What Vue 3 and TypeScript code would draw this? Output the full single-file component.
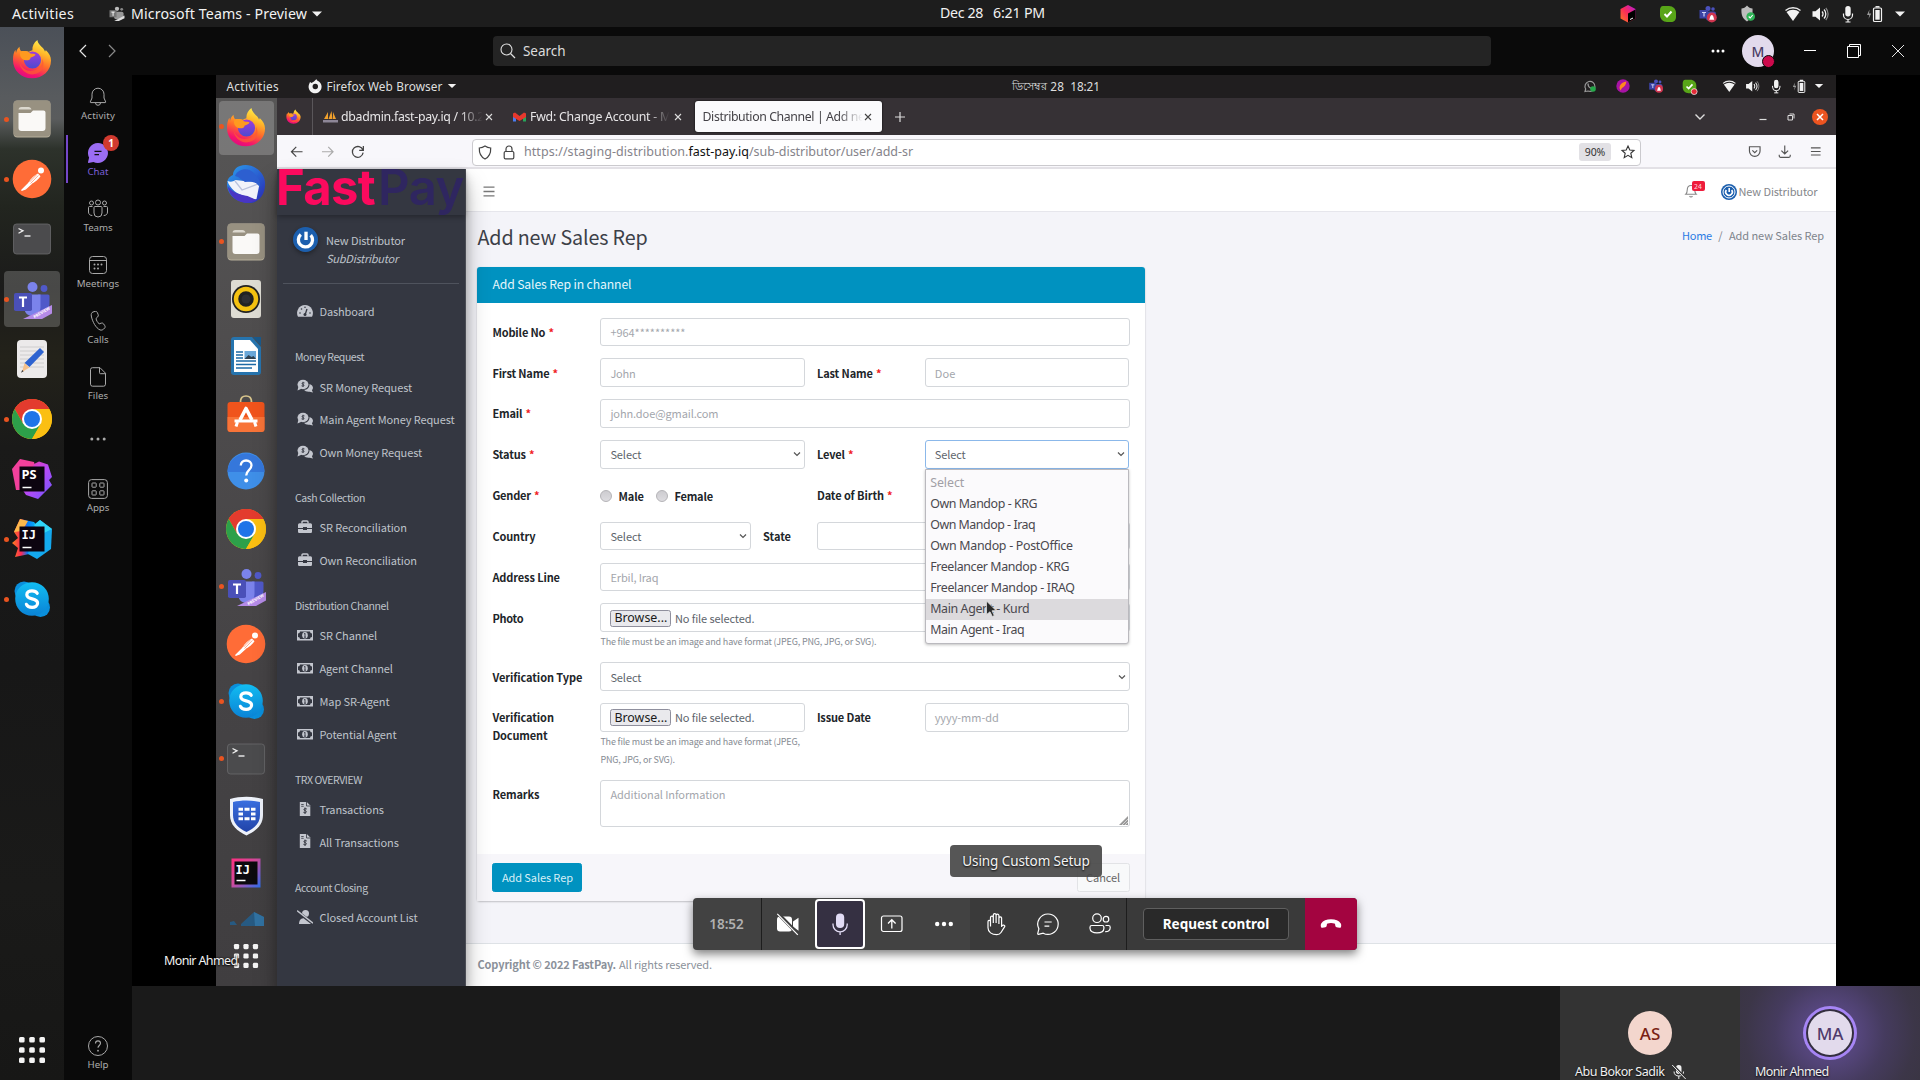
<script setup lang="ts">
interface DockApp { id: string; icon: string; dot?: boolean; active?: boolean }
interface NavItem { label: string; icon: string; w: number }
interface NavGroup { title: string; w: number; items: NavItem[] }

// Spreads a label over a given width by adjusting its tracking.
const vFit = {
  mounted(el: HTMLElement, binding: { value: number }) {
    const count = (el.textContent ?? '').length
    const width = el.getBoundingClientRect().width
    if (count > 0 && width > 0) {
      el.style.letterSpacing = ((binding.value - width) / count).toFixed(3) + 'px'
    }
  },
}

const dock: DockApp[] = [
  { id: 'd1', icon: 'firefox' },
  { id: 'd2', icon: 'folder', dot: true },
  { id: 'd3', icon: 'postman', dot: true },
  { id: 'd4', icon: 'terminal' },
  { id: 'd5', icon: 'teams', dot: true, active: true },
  { id: 'd6', icon: 'editor' },
  { id: 'd7', icon: 'chrome', dot: true },
  { id: 'd8', icon: 'phpstorm' },
  { id: 'd9', icon: 'idea', dot: true },
  { id: 'd10', icon: 'skype', dot: true },
]

const innerDock: DockApp[] = [
  { id: 'i1', icon: 'firefox', dot: true, active: true },
  { id: 'i2', icon: 'thunderbird' },
  { id: 'i3', icon: 'folder', dot: true },
  { id: 'i4', icon: 'rhythmbox' },
  { id: 'i5', icon: 'writer' },
  { id: 'i6', icon: 'software' },
  { id: 'i7', icon: 'yelp' },
  { id: 'i8', icon: 'chrome' },
  { id: 'i9', icon: 'teams', dot: true },
  { id: 'i10', icon: 'postman' },
  { id: 'i11', icon: 'skype', dot: true },
  { id: 'i12', icon: 'terminal', dot: true },
  { id: 'i13', icon: 'forti' },
  { id: 'i14', icon: 'ideaold' },
]

const rail = [
  { label: 'Activity', icon: 'r-bell', w: 34 },
  { label: 'Chat', icon: 'r-chat', w: 21, active: true },
  { label: 'Teams', icon: 'r-teams', w: 29 },
  { label: 'Meetings', icon: 'r-cal', w: 42.5 },
  { label: 'Calls', icon: 'r-call', w: 21.5 },
  { label: 'Files', icon: 'r-file', w: 20.5 },
  { label: '', icon: 'r-more', w: 0 },
  { label: 'Apps', icon: 'r-apps', w: 22.5 },
]

const groups: NavGroup[] = [
  { title: 'Money Request', w: 69, items: [
    { label: 'SR Money Request', icon: 'n-comments', w: 92.5 },
    { label: 'Main Agent Money Request', icon: 'n-comments', w: 135 },
    { label: 'Own Money Request', icon: 'n-comments', w: 102.5 },
  ] },
  { title: 'Cash Collection', w: 70, items: [
    { label: 'SR Reconciliation', icon: 'n-case', w: 87.3 },
    { label: 'Own Reconciliation', icon: 'n-case', w: 97.3 },
  ] },
  { title: 'Distribution Channel', w: 93.5, items: [
    { label: 'SR Channel', icon: 'n-bill', w: 57.5 },
    { label: 'Agent Channel', icon: 'n-bill', w: 73.3 },
    { label: 'Map SR-Agent', icon: 'n-bill', w: 70 },
    { label: 'Potential Agent', icon: 'n-bill', w: 77 },
  ] },
  { title: 'TRX OVERVIEW', w: 67, items: [
    { label: 'Transactions', icon: 'n-invoice', w: 64.3 },
    { label: 'All Transactions', icon: 'n-invoice', w: 79.2 },
  ] },
  { title: 'Account Closing', w: 72.7, items: [
    { label: 'Closed Account List', icon: 'n-userslash', w: 98 },
  ] },
]

const options = [
  { label: 'Select', w: 34, muted: true },
  { label: 'Own Mandop - KRG', w: 107 },
  { label: 'Own Mandop - Iraq', w: 105 },
  { label: 'Own Mandop - PostOffice', w: 142.5 },
  { label: 'Freelancer Mandop - KRG', w: 139 },
  { label: 'Freelancer Mandop - IRAQ', w: 144.5 },
  { label: 'Main Agent - Kurd', w: 99, hover: true },
  { label: 'Main Agent - Iraq', w: 94 },
]
</script>

<template>
  <svg class="defs" width="0" height="0" aria-hidden="true">
    <defs>
      <linearGradient id="gFox" x1="0.75" y1="0" x2="0.35" y2="1">
        <stop offset="0" stop-color="#fff44f" /><stop offset=".3" stop-color="#ffb82a" /><stop offset=".58" stop-color="#ff6a2b" /><stop offset=".85" stop-color="#f5156c" /><stop offset="1" stop-color="#e00b80" />
      </linearGradient>
      <linearGradient id="gFoxP" x1="0" y1="0" x2="0" y2="1"><stop offset="0" stop-color="#a13bdc" /><stop offset="1" stop-color="#4b4ad0" /></linearGradient>
      <linearGradient id="gSky" x1="0" y1="0" x2="0" y2="1"><stop offset="0" stop-color="#12bdf2" /><stop offset="1" stop-color="#0a83d6" /></linearGradient>
      <linearGradient id="gPs" x1="0" y1="0" x2="1" y2="1"><stop offset="0" stop-color="#ff318c" /><stop offset=".5" stop-color="#b74af7" /><stop offset="1" stop-color="#6b57ff" /></linearGradient>
      <linearGradient id="gIj" x1="0" y1="0" x2="1" y2="0"><stop offset="0" stop-color="#fc801d" /><stop offset=".35" stop-color="#fe2857" /><stop offset=".6" stop-color="#087cfa" /><stop offset="1" stop-color="#07c3f2" /></linearGradient>
      <linearGradient id="gIjo" x1="0" y1="0" x2="1" y2="1"><stop offset="0" stop-color="#fe2f80" /><stop offset=".45" stop-color="#d14a9c" /><stop offset="1" stop-color="#2a6ff0" /></linearGradient>
      <linearGradient id="gBird" x1="0" y1="0" x2="1" y2="1"><stop offset="0" stop-color="#2aa0ee" /><stop offset="1" stop-color="#2b2ab8" /></linearGradient>
      <linearGradient id="gForti" x1="0" y1="0" x2="0" y2="1"><stop offset="0" stop-color="#3a6fe0" /><stop offset="1" stop-color="#2143a8" /></linearGradient>
      <linearGradient id="gCube" x1="1" y1="0" x2="0" y2="1"><stop offset="0" stop-color="#b01be0" /><stop offset=".5" stop-color="#fb2a5b" /><stop offset="1" stop-color="#fd7a1e" /></linearGradient>
    </defs>

    <symbol id="firefox" viewBox="0 0 40 40">
      <path d="M20 39.3C9 39.3 1 31.500 1 20.700c0-4.500.8-7.500 2.400-9.900L4 14c.6-2.800 1.800-4.800 3.500-6.200 0 2.200.7 3.800 2.300 4.700 2-.6 4.600-.8 7 .2 1.400-.8 3-1.200 3.600-1.500-.3-4 1.600-7.800 5-10.200C26 5 29 7 31.300 9.500c0 0 1.200 1.400 1.600 3 .8-.3.800-1.500.8-1.500 3.500 3.400 5.300 6.500 5.300 10.500C39 31.500 31 39.300 20 39.300z" fill="url(#gFox)" />
      <circle cx="20.500" cy="21" r="8.600" fill="url(#gFoxP)" />
      <path d="M8.500 12.500c3.500-1 7.500-.4 10 2 2 .2 4 .2 5 1-.6 2-4 2.500-5 3.200 0 2.300-3 3-6.200 2.300C9 20 7 16 8.500 12.500z" fill="#ff9a1f" />
      <path d="M7.500 23c2 7 8 9.500 13 8.800 6-.8 10.500-5 9.500-12 3 5 1.500 12-4.500 14.500C17 38 8 32 7.500 23z" fill="#ff5a34" opacity=".75" />
    </symbol>
    <symbol id="folder" viewBox="0 0 40 40">
      <rect x="1.500" y="1.500" width="37" height="37" rx="4" fill="#b6ae9a" /><rect x="1.500" y="1.500" width="37" height="36" rx="4" fill="#989181" />
      <path d="M6.500 11c0-2 1-3 3-3h7c1.500 0 2.500 1 3 2.500H6.500z" fill="#dcd8ce" />
      <path d="M6.500 14h12l2.500-2.500h10.500a2 2 0 0 1 2 2V29a3 3 0 0 1-3 3h-21a3 3 0 0 1-3-3z" fill="#faf9f7" />
    </symbol>
    <symbol id="postman" viewBox="0 0 40 40">
      <circle cx="20" cy="20" r="19.300" fill="#ff6c37" />
      <circle cx="29" cy="11.500" r="3" fill="#fff" />
      <path d="M26 14.500l2.500 2.700c-2 3-5.500 6-10 8.300l-2-2c2.500-4 6-7.500 9.500-9z" fill="#fff" />
      <path d="M17.500 23.500L9.500 31.500l4-1.500 6-5.500" stroke="#fff" stroke-width="1.200" fill="#fff" />
      <path d="M18.500 24.500l7.800-8M17.500 23l7-7.200" stroke="#ff6c37" stroke-width=".6" />
    </symbol>
    <symbol id="terminal" viewBox="0 0 40 40">
      <rect x="1.500" y="5" width="37" height="30" rx="3" fill="#4b4b4d" stroke="#6a6a6c" stroke-width=".8" />
      <path d="M6.500 9.500l4.500 2.300-4.500 2.400" stroke="#f0f0f0" stroke-width="1.300" fill="none" /><path d="M12.500 17h6" stroke="#f0f0f0" stroke-width="1.400" />
    </symbol>
    <symbol id="teams" viewBox="0 0 40 40">
      <circle cx="32" cy="9.500" r="3.400" fill="#5059c9" /><path d="M26 15.500h10a1.500 1.500 0 0 1 1.500 1.500v8c0 4-3 7-6 7h-6z" fill="#5059c9" />
      <circle cx="20.500" cy="8" r="5" fill="#7b83eb" /><path d="M12 15.500h16.500V28c0 5-3.500 9-8.300 9S12 33 12 28z" fill="#7b83eb" />
      <rect x="2" y="14" width="18" height="18" rx="1.800" fill="#4a50b8" />
      <path d="M7 18.500h8M11 18.500v9.500" stroke="#fff" stroke-width="2.200" />
      <path d="M40 26v8.500L30 40H11z" fill="#b58be8" />
      <text x="0" y="0" transform="translate(22.500 39.500) rotate(-31)" font-size="4.200" font-weight="700" fill="#fff" font-family="Open Sans, sans-serif">PREVIEW</text>
    </symbol>
    <symbol id="editor" viewBox="0 0 40 40">
      <rect x="5" y="1" width="30" height="38" rx="4" fill="#eceaea" />
      <path d="M8 8h24M8 12h24M8 16h24M8 20h24M8 24h24M8 28h24" stroke="#c8c6c6" stroke-width=".8" />
      <path d="M28 9l4 4-14.500 15-5-4z" fill="#2d63d0" /><path d="M12.500 24l5 4.500-7.500 4.500z" fill="#f4c08a" /><path d="M10.300 31l1.300 1.200-2.600 1.600z" fill="#333" />
    </symbol>
    <symbol id="chrome" viewBox="0 0 40 40">
      <circle cx="20" cy="20" r="20" fill="#fbbc05" />
      <path d="M20 20L2.700 10A20 20 0 0 1 37.300 10H20z" fill="#e33b2e" /><path d="M20 0a20 20 0 0 1 17.300 10H20L11.300 25 2.700 10A20 20 0 0 1 20 0z" fill="#e33b2e" />
      <path d="M2.700 10L11.300 25h17.400L20 40A20 20 0 0 1 2.700 10z" fill="#2da04a" /><path d="M28.700 25L20 40a20 20 0 0 0 17.300-30H20z" fill="#fbbf12" />
      <circle cx="20" cy="20" r="10" fill="#fff" /><circle cx="20" cy="20" r="8" fill="#1f74e8" />
    </symbol>
    <symbol id="phpstorm" viewBox="0 0 40 40">
      <path d="M0 10L8 0l14 3 2 8-14 20H4z" fill="#f2409c" /><path d="M22 5l5-2.500 9 3L40 18l-3 3 3 5-14 14-12-4-4-6z" fill="url(#gPs)" />
      <rect x="7.500" y="7.500" width="25" height="25" fill="#0c0410" />
      <text x="9.500" y="19.800" font-size="12.800" font-weight="700" fill="#fff" font-family="Open Sans, sans-serif">PS</text><path d="M10.500 28.500h9" stroke="#fff" stroke-width="1.500" />
    </symbol>
    <symbol id="idea" viewBox="0 0 40 40">
      <path d="M2 13L8 0l14 3 4 5-4 26L3 38l3-9-6-5 6-5z" fill="url(#gIj)" /><path d="M2 13L8 0l8 2-6 10z" fill="#fdb84c" /><path d="M22 6l6-5 12 9-1 20-14 10-9-5z" fill="#14a9ef" /><path d="M22 6l6-5 12 9-10 5z" fill="#30d5f6" />
      <rect x="7.500" y="7.500" width="25" height="25" fill="#0c0410" />
      <text x="9.500" y="19.500" font-size="12" font-weight="700" fill="#fff" font-family="DejaVu Sans Mono, monospace">IJ</text><path d="M10.500 28.500h9" stroke="#fff" stroke-width="1.500" />
    </symbol>
    <symbol id="ideaold" viewBox="0 0 40 40">
      <rect x="5.500" y="5.500" width="29" height="29" fill="url(#gIjo)" /><rect x="8.500" y="8.500" width="23" height="23" fill="#0c0a0e" />
      <text x="9.500" y="21" font-size="12" font-weight="700" fill="#fff" font-family="DejaVu Sans Mono, monospace">IJ</text><path d="M10.500 27.500h9" stroke="#fff" stroke-width="1.500" />
    </symbol>
    <symbol id="skype" viewBox="0 0 40 40">
      <circle cx="12" cy="12" r="9.500" fill="#0a8fdc" /><circle cx="28.500" cy="28.500" r="9.500" fill="#0a8fdc" /><circle cx="20" cy="20" r="16.800" fill="url(#gSky)" />
      <path d="M25.200 14.300c-1-1.800-3-2.500-5.200-2.500-3 0-5.200 1.600-5.200 4 0 5.500 10.800 2.700 10.800 8.300 0 2.600-2.300 4.300-5.500 4.300-2.700 0-4.800-1-5.700-3.100" stroke="#fff" stroke-width="3.200" stroke-linecap="round" fill="none" />
    </symbol>
    <symbol id="thunderbird" viewBox="0 0 40 40">
      <path d="M14 2C24-2 38 6 39 18c1 12-6 20-14 21C14 40 1 33 1 20c0-5 3-8 6-9 0-4 3-8 7-9z" fill="url(#gBird)" />
      <path d="M1.500 17c3 1 5 1 8-1l17 2 7 2-3 15c-4 1-8-2-11-3C12 31 4 25 1.500 17z" fill="#f1f3fa" /><path d="M9 17l7 9 16-6" stroke="#b9c2dd" fill="none" stroke-width="1.300" /><path d="M9 12c3-8 14-9 19-3 3 3 7 8 6 14l-6-6-9 1-7-5z" fill="#2d5fd0" /><path d="M1.500 22c4 6 12 9 20 10l9 4c-8 6-26 3-29-14z" fill="#4a35c4" />
    </symbol>
    <symbol id="rhythmbox" viewBox="0 0 40 40">
      <rect x="5" y="1" width="30" height="38" rx="3" fill="#dedcd3" /><circle cx="20" cy="20" r="14" fill="#222" /><circle cx="20" cy="20" r="10" fill="none" stroke="#f5c211" stroke-width="4.500" /><circle cx="20" cy="20" r="4.500" fill="#2e2e33" />
    </symbol>
    <symbol id="writer" viewBox="0 0 40 40">
      <path d="M8 1h18l9 10v25a3 3 0 0 1-3 3H8a3 3 0 0 1-3-3V4a3 3 0 0 1 3-3z" fill="#2674ae" /><path d="M27 1h8v9z" fill="#1a5a8c" /><path d="M8 4h16l8 9v23H8z" fill="#fff" />
      <path d="M10 16h7M10 19h7M10 22h7M10 25h20M10 28.500h20M10 32h16" stroke="#1d6aa5" stroke-width="1.300" /><rect x="18.500" y="15" width="11.500" height="8" fill="#6aa7d8" /><path d="M18.500 23l4-4 3 2 2-1 2.500 3z" fill="#31414f" />
    </symbol>
    <symbol id="software" viewBox="0 0 40 40">
      <path d="M14.500 9.500C14 3 17 2 20 2s6 1 5.500 7.500" stroke="#d9c58c" stroke-width="1.600" fill="none" /><rect x="1.500" y="8" width="37" height="30" rx="3" fill="#f0541c" /><path d="M1.500 23h37v12a3 3 0 0 1-3 3h-31a3 3 0 0 1-3-3z" fill="#f87438" />
      <path d="M14 26L20 14.500 26 26" stroke="#fff" stroke-width="3.600" fill="none" stroke-linejoin="round" /><path d="M8.500 27h23" stroke="#fff" stroke-width="3" /><path d="M11.500 28l-1.500 4.500M28.500 28l1.500 4.500" stroke="#fff" stroke-width="3" />
    </symbol>
    <symbol id="yelp" viewBox="0 0 40 40">
      <circle cx="20" cy="20" r="18.500" fill="#3f8fe8" /><path d="M1.500 21a18.500 18.500 0 0 1 37 0z" fill="#3577db" /><path d="M14.800 14.500c0-3 2.200-5 5.300-5s5.400 2 5.400 4.800c0 5-5.300 4.700-5.300 10.200" stroke="#fff" stroke-width="2.300" fill="none" /><circle cx="20.200" cy="29.500" r="2" fill="#fff" />
    </symbol>
    <symbol id="forti" viewBox="0 0 40 40">
      <path d="M4 3c10-3 23-3 33 0v16c0 10-7 16-16.500 20.500C11 35 4 29 4 19z" fill="#eef2fa" /><path d="M7 6c8-2 19-2 27 0v13c0 8-5 13-13.500 17C12 32 7 27 7 19z" fill="url(#gForti)" />
      <path d="M12.500 13.200h4.500M18.500 13.200h5M25 13.200h4.500M12.500 18h4.500M25 18h4.500M12.500 22.800h4.500M18.500 22.800h5M25 22.800h4.500" stroke="#fff" stroke-width="3" />
    </symbol>

    <symbol id="wifi" viewBox="0 0 20 20"><path d="M2.500 6.500a12 12 0 0 1 15 0" stroke="#e8e8e8" stroke-width="1.500" fill="none" /><path d="M3.500 8a11 11 0 0 1 13 0L10 17z" fill="#f2f2f2" /></symbol>
    <symbol id="vol" viewBox="0 0 20 20"><path d="M2.500 7.300h3L10 3.500v13l-4.500-3.800h-3z" fill="#f2f2f2" /><path d="M12 7.500a3.500 3.500 0 0 1 0 5M14 5.500a6.500 6.500 0 0 1 0 9" stroke="#f2f2f2" stroke-width="1.300" fill="none" /><path d="M15.800 4a9 9 0 0 1 0 12" stroke="#8a8a8a" stroke-width="1.200" fill="none" /></symbol>
    <symbol id="micro" viewBox="0 0 20 20"><rect x="7.300" y="2" width="5.400" height="10.500" rx="2.700" fill="#f2f2f2" /><path d="M5.500 9.500v1.500a4.500 4.500 0 0 0 9 0V9.500M10 15v3M7.500 18h5" stroke="#f2f2f2" stroke-width="1.200" fill="none" /></symbol>
    <symbol id="battery" viewBox="0 0 20 20"><path d="M3.500 5.500L1 11h2.300L2.500 15 5.200 9.500H3z" fill="#9a9a9a" /><rect x="7.500" y="4" width="8" height="13.500" rx="1" fill="none" stroke="#f2f2f2" stroke-width="1.200" /><rect x="9.300" y="6" width="4.400" height="9.700" fill="#f2f2f2" /><path d="M9.500 2.800h4" stroke="#f2f2f2" stroke-width="1.500" /></symbol>
    <symbol id="caret" viewBox="0 0 12 12"><path d="M1 3.500h10L6 8.500z" fill="#f2f2f2" /></symbol>
    <symbol id="skypetray" viewBox="0 0 20 20"><path d="M5 2h6c4 0 7 3 7 7v4c0 3-2 5-5 5H9c-4 0-7-3-7-7V6c0-2 1-4 3-4z" fill="#58a518" /><path d="M6.500 10l2.500 2.500 4.500-5" stroke="#fff" stroke-width="2" fill="none" /></symbol>
    <symbol id="teamstray" viewBox="0 0 20 20"><circle cx="10" cy="4.500" r="2.500" fill="#4a51bd" /><circle cx="15" cy="5" r="1.800" fill="#4a51bd" /><rect x="8" y="7.500" width="10" height="9" rx="2" fill="#4048a8" /><rect x="1.500" y="6" width="8.500" height="8.500" fill="#3b43a5" /><path d="M4 8.500h4M6 8.500v4" stroke="#cfd2f5" stroke-width="1.200" /><circle cx="13.800" cy="13.500" r="5" fill="#d0354f" /><path d="M11.200 15.800c1-.9.600-4.500 2.600-4.700 2 .2 1.600 3.800 2.600 4.700z" fill="#fff" /></symbol>

    <symbol id="r-bell" viewBox="0 0 20 20"><path d="M10 1.200a6 6 0 0 0-6 6V11l-1.700 3.900c-.1.400.1.700.5.700h14.400c.4 0 .6-.3.500-.7L16 11V7.200a6 6 0 0 0-6-6zM7.500 15.800a2.500 2.500 0 0 0 5 0" fill="none" stroke="#a9a9a9" /></symbol>
    <symbol id="r-chat" viewBox="0 0 20 20"><path d="M10 0a10 10 0 1 1-4.600 18.900L.6 20c-.4 0-.7-.3-.6-.7l1.100-4.700A10 10 0 0 1 10 0z" fill="#9b6df3" /><path d="M6.500 8.300h7M6.500 11.700h4.500" stroke="#111" stroke-width="1.200" /></symbol>
    <symbol id="r-teams" viewBox="0 0 20 20"><g fill="none" stroke="#a9a9a9"><circle cx="3.500" cy="4" r="2" /><circle cx="16.500" cy="4" r="2" /><circle cx="10" cy="3.500" r="2.500" /><path d="M6 8.500c0-.6.400-1 1-1h6c.6 0 1 .4 1 1V14a4 4 0 0 1-8 0zM4.500 7.500H1.500c-.6 0-1 .4-1 1V13c0 2.200 1.500 3.500 3.800 3.500M15.500 7.500h3c.6 0 1 .4 1 1V13c0 2.200-1.500 3.500-3.800 3.500" /></g></symbol>
    <symbol id="r-cal" viewBox="0 0 20 20"><rect x="1.500" y="1.500" width="17" height="17" rx="3" fill="none" stroke="#a9a9a9" /><path d="M1.500 5.500h17" stroke="#a9a9a9" /><g fill="#a9a9a9"><circle cx="10" cy="9.500" r="1" /><circle cx="13.500" cy="9.500" r="1" /><circle cx="6.500" cy="9.500" r="1" /><circle cx="6.500" cy="13.500" r="1" /><circle cx="10" cy="13.500" r="1" /></g></symbol>
    <symbol id="r-call" viewBox="0 0 20 20"><path d="M5 1l2-.6c1-.3 1.900.2 2.300 1.100l.9 2.200c.3.800.1 1.600-.5 2.200L8 7.500c.4 2 1.500 4 3.200 5.300l2.300-.7c.8-.2 1.600 0 2 .7l1.300 1.900c.5.800.4 1.800-.2 2.400l-1 1c-1 .9-2.400 1.300-3.600.8C8 17.300 4.300 10.500 3.300 5 3 3 3.500 1.500 5 1z" fill="none" stroke="#a9a9a9" /></symbol>
    <symbol id="r-file" viewBox="0 0 20 20"><path d="M4.500.7H12l5.500 5.500v11a2 2 0 0 1-2 2h-11a2 2 0 0 1-2-2v-14.500a2 2 0 0 1 2-2zM11.500.7v5a1 1 0 0 0 1 1h5" fill="none" stroke="#a9a9a9" /></symbol>
    <symbol id="r-more" viewBox="0 0 20 20"><g fill="#a9a9a9"><circle cx="3.800" cy="10" r="1.500" /><circle cx="10" cy="10" r="1.500" /><circle cx="16.200" cy="10" r="1.500" /></g></symbol>
    <symbol id="r-apps" viewBox="0 0 20 20"><g fill="none" stroke="#a9a9a9"><rect x=".6" y=".6" width="18.800" height="18.800" rx="3" /><rect x="4" y="4" width="4.200" height="4.200" rx=".5" /><rect x="11.800" y="4" width="4.200" height="4.200" rx=".5" /><rect x="4" y="11.800" width="4.200" height="4.200" rx=".5" /><rect x="11.800" y="11.800" width="4.200" height="4.200" rx=".5" /></g></symbol>
    <symbol id="r-help" viewBox="0 0 20 20"><circle cx="10" cy="10" r="9.500" fill="none" stroke="#a9a9a9" /><path d="M7.500 7.500c0-1.600 1-2.600 2.500-2.600s2.500 1 2.500 2.400c0 2.100-2.500 2.300-2.500 4.500" fill="none" stroke="#a9a9a9" stroke-width="1.100" /><circle cx="10" cy="14.700" r=".9" fill="#a9a9a9" /></symbol>

    <symbol id="n-dash" viewBox="0 0 16 16"><path d="M8 2a8 8 0 0 0-7 11.800h14A8 8 0 0 0 8 2z" fill="#c3c6ce" /><path d="M8 12l2-6" stroke="#343741" stroke-width="1.300" /><g fill="#343741"><circle cx="8" cy="11.500" r="1.500" /><circle cx="3" cy="10" r=".8" /><circle cx="4.500" cy="6" r=".8" /><circle cx="13" cy="10" r=".8" /><circle cx="8" cy="4.300" r=".8" /></g></symbol>
    <symbol id="n-comments" viewBox="0 0 16 16"><ellipse cx="6" cy="6.500" rx="5.500" ry="4.700" fill="#c3c6ce" /><path d="M1.500 8L.5 12.500l4-1.800zM12.500 6c3.500 1 4.500 4.200 2.400 6.300l1.100 2.200-3.200-.8c-2.600.4-4.800-.4-5.800-1.900 3.400-.2 5.700-2.500 5.500-5.800z" fill="#c3c6ce" /><path d="M7.500 4.900c-2.500-.8-3.200.9-1.500 1.500s1.400 2.300-1.500 1.400M6 3.800v5.200" stroke="#343741" fill="none" stroke-width=".9" /></symbol>
    <symbol id="n-case" viewBox="0 0 16 16"><path d="M5 4.500V3a1 1 0 0 1 1-1h4a1 1 0 0 1 1 1v1.500" fill="none" stroke="#c3c6ce" stroke-width="1.400" /><path d="M2.500 4.300h11A1.500 1.500 0 0 1 15 5.800V9h-5V8H6v1H1V5.800a1.500 1.500 0 0 1 1.500-1.500zM1 10h5v1h4v-1h5v2.800a1.200 1.200 0 0 1-1.200 1.200H2.200A1.200 1.200 0 0 1 1 12.800z" fill="#c3c6ce" /></symbol>
    <symbol id="n-bill" viewBox="0 0 16 16"><rect x="-.5" y="3" width="17" height="10.500" rx="1" fill="#c3c6ce" /><path d="M3 4.500h10a2 2 0 0 0 2 2V10a2 2 0 0 0-2 2H3a2 2 0 0 0-2-2V6.500a2 2 0 0 0 2-2z" fill="#343741" /><ellipse cx="8" cy="8.200" rx="2.800" ry="3.200" fill="#c3c6ce" /><path d="M8 6.200v4M7 6.700h1M7 10.200h2" stroke="#343741" stroke-width=".9" /></symbol>
    <symbol id="n-invoice" viewBox="0 0 16 16"><path d="M2.800 1h7l3.500 3.500V15H2.800z" fill="#c3c6ce" /><path d="M9.500 1v4h4M4.200 3.500h2.500M4.200 5.300h2.500" stroke="#343741" stroke-width=".8" fill="none" /><path d="M9.800 8c-2.500-1.200-4 .9-1.700 1.600s1.500 3-1.700 1.700M8 6.500v6.500" stroke="#343741" stroke-width="1" fill="none" /></symbol>
    <symbol id="n-userslash" viewBox="0 0 16 16"><circle cx="8.500" cy="4.500" r="3.500" fill="#c3c6ce" /><path d="M2 15c0-4 2-6 6-6s6 2 6 6z" fill="#c3c6ce" /><path d="M-.5 2l17 13" stroke="#343741" stroke-width="3" /><path d="M0 1.500l16 12.700" stroke="#c3c6ce" stroke-width="1.400" /></symbol>
    <symbol id="chev" viewBox="0 0 10 10"><path d="M2 3.500l3 3 3-3" stroke="#555" stroke-width="1.200" fill="none" /></symbol>
    <symbol id="power" viewBox="0 0 24 24"><circle cx="12" cy="12" r="12" fill="#1c5fae" /><path d="M7.500 7.200a6.800 6.800 0 1 0 9.500.6" stroke="#fff" stroke-width="3.200" fill="none" /><path d="M12.500 4.500v8" stroke="#fff" stroke-width="3.200" /></symbol>
    <symbol id="gridDots" viewBox="0 0 28 28"><g fill="#f4f4f4"><rect x="1" y="1" width="5.600" height="5.600" rx="1.500" /><rect x="11.200" y="1" width="5.600" height="5.600" rx="1.500" /><rect x="21.400" y="1" width="5.600" height="5.600" rx="1.500" /><rect x="1" y="11.200" width="5.600" height="5.600" rx="1.500" /><rect x="11.200" y="11.200" width="5.600" height="5.600" rx="1.500" /><rect x="21.400" y="11.200" width="5.600" height="5.600" rx="1.500" /><rect x="1" y="21.400" width="5.600" height="5.600" rx="1.500" /><rect x="11.200" y="21.400" width="5.600" height="5.600" rx="1.500" /><rect x="21.400" y="21.400" width="5.600" height="5.600" rx="1.500" /></g></symbol>
  </svg>

  <div class="desktop">
    <header class="topbar">
      <div class="tb-left">
        <span v-fit="62">Activities</span>
        <svg class="tb-teams" viewBox="0 0 16 16"><circle cx="8" cy="3" r="2.300" fill="#bbb" /><circle cx="13" cy="3.500" r="1.500" fill="#888" /><rect x="5" y="6" width="10" height="8" rx="2" fill="#999" /><rect x="0" y="4.500" width="7.500" height="7.500" fill="#777" /><path d="M2 6.500h3.500M3.800 6.500v4" stroke="#fff" /><path d="M16 10v3l-6 3H5z" fill="#ddd" /></svg>
        <span v-fit="176">Microsoft Teams - Preview</span>
        <svg class="caret"><use href="#caret" /></svg>
      </div>
      <div class="tb-clock"><span v-fit="43">Dec 28</span><span v-fit="52">6:21 PM</span></div>
      <div class="tray">
        <i class="cell ind"><svg width="16" height="18" viewBox="0 0 16 18"><path d="M8 0l7.500 4v9.500L8 17.500.500 13.500V4z" fill="url(#gCube)" /><path d="M8 8.500l7.500-4v9L8 17.500z" fill="#000" /><path d="M10 14.500l3-1.500" stroke="#fff" /></svg></i>
        <i class="cell ind"><svg width="20" height="20"><use href="#skypetray" /></svg></i>
        <i class="cell ind"><svg width="20" height="20"><use href="#teamstray" /></svg></i>
        <i class="cell ind"><svg width="16" height="18" viewBox="0 0 16 18"><path d="M1.500 3.500c2 0 4-1 5.500-3 1.500 2 3.500 3 5.500 3 .5 6-1 10-5.500 13-4.500-3-6-7-5.500-13z" fill="#bdbdbd" /><circle cx="10.700" cy="11.500" r="4.300" fill="#2fb457" /><path d="M8.700 11.500l1.500 1.500 2.500-3" stroke="#fff" stroke-width="1.100" fill="none" /></svg></i>
        <i class="gap11"></i>
        <i class="cell sys"><svg width="20" height="20"><use href="#wifi" /></svg></i>
        <i class="cell sys"><svg width="20" height="20"><use href="#vol" /></svg></i>
        <i class="cell sys"><svg width="20" height="20"><use href="#micro" /></svg></i>
        <i class="cell sys"><svg width="20" height="20"><use href="#battery" /></svg></i>
        <i class="cell car"><svg class="caret"><use href="#caret" /></svg></i>
      </div>
    </header>

    <div class="body">
      <nav class="dock">
        <div v-for="a in dock" :key="a.id" class="dock-item" :class="{ active: a.active }">
          <i v-if="a.dot" class="run-dot"></i>
          <svg width="40" height="40"><use :href="'#' + a.icon" /></svg>
        </div>
        <svg class="dock-grid"><use href="#gridDots" /></svg>
      </nav>

      <div class="app">
        <div class="app-head">
          <div class="nav-arrows">
            <svg width="12" height="14" viewBox="0 0 12 14"><path d="M9 1L3 7l6 6" fill="none" stroke="#e6e6e6" stroke-width="1.200" /></svg>
            <svg width="12" height="14" viewBox="0 0 12 14"><path d="M3 1l6 6-6 6" fill="none" stroke="#8a8a8a" stroke-width="1.200" /></svg>
          </div>
          <div class="search">
            <svg width="16" height="16" viewBox="0 0 16 16"><circle cx="6.500" cy="6.500" r="5.500" fill="none" stroke="#e0e0e0" stroke-width="1.100" /><path d="M10.500 10.500L15 15" stroke="#e0e0e0" stroke-width="1.200" /></svg>
            <span v-fit="42.5">Search</span>
          </div>
          <div class="win">
            <svg class="w-dots" width="14" height="4" viewBox="0 0 14 4"><circle cx="2" cy="2" r="1.500" fill="#fff" /><circle cx="7" cy="2" r="1.500" fill="#fff" /><circle cx="12" cy="2" r="1.500" fill="#fff" /></svg>
            <div class="me">M<i class="busy"></i></div>
            <svg class="w-btn" viewBox="0 0 14 14"><path d="M1 6.500h12" stroke="#fff" /></svg>
            <svg class="w-btn" viewBox="0 0 14 14"><path d="M.5 2.500h11v11H.5zM2.500 2.500v-2h11v11h-2" fill="none" stroke="#fff" /></svg>
            <svg class="w-btn" viewBox="0 0 14 14"><path d="M1 1l12 12M13 1L1 13" stroke="#fff" stroke-width=".9" /></svg>
          </div>
        </div>

        <div class="app-body">
          <nav class="rail">
            <div v-for="r in rail" :key="r.icon" class="rail-item" :class="{ active: r.active, solo: !r.label }">
              <svg width="20" height="20"><use :href="'#' + r.icon" /></svg>
              <b v-if="r.active" class="count">1</b>
              <span v-if="r.label" v-fit="r.w">{{ r.label }}</span>
            </div>
            <div class="rail-item help">
              <svg width="20" height="20"><use href="#r-help" /></svg>
              <span v-fit="21">Help</span>
            </div>
          </nav>

          <main class="call">
            <div class="stage">
              <div class="screen">
                <div class="s-top">
                  <div class="s-left">
                    <span v-fit="52.5">Activities</span>
                    <svg width="14" height="14" viewBox="0 0 14 14"><path d="M2 3l1.500 1L6 2.500 8.500 0c0 2 3 2 4.200 4.500A6.500 6.500 0 1 1 1 5.500z" fill="#f2f2f2" /><circle cx="7.300" cy="7.500" r="2.700" fill="#201e1f" /></svg>
                    <span v-fit="116">Firefox Web Browser</span>
                    <svg class="caret sm"><use href="#caret" /></svg>
                  </div>
                  <div class="s-clock"><span v-fit="35.5" class="bn">ডিসেম্বর</span><span v-fit="14">28</span><span v-fit="29.5">18:21</span></div>
                  <div class="s-tray">
                    <i class="cell"><svg width="14" height="14" viewBox="0 0 14 14"><path d="M2 12.500l.7-2.500A5 5 0 1 1 5 12z" fill="none" stroke="#999" stroke-width="1.200" /><path d="M5 4.500c0 3 2 5 4.500 5" stroke="#999" stroke-width="1.400" fill="none" /><circle cx="10" cy="10" r="2.800" fill="#25a84a" /></svg></i>
                    <i class="cell"><svg width="14" height="14" viewBox="0 0 14 14"><circle cx="7" cy="7" r="6.700" fill="#a713a5" /><path d="M3.500 9c.5-4 3-6 7-6.500-1 4-2 5-4.500 6.500l-1.500 2.500z" fill="#ff8a1f" /></svg></i>
                    <i class="cell"><svg width="16" height="16"><use href="#teamstray" /></svg></i>
                    <i class="cell"><svg width="17" height="17" viewBox="0 0 20 20"><use href="#skypetray" /><circle cx="15.500" cy="16" r="3.500" fill="#e22b38" stroke="#fff" stroke-width=".8" /></svg></i>
                    <i class="gap10"></i>
                    <i class="cell sys"><svg width="16.500" height="16.500"><use href="#wifi" /></svg></i>
                    <i class="cell sys"><svg width="16.500" height="16.500"><use href="#vol" /></svg></i>
                    <i class="cell sys"><svg width="16.500" height="16.500"><use href="#micro" /></svg></i>
                    <i class="cell sys"><svg width="16.500" height="16.500"><use href="#battery" /></svg></i>
                    <i class="cell car"><svg class="caret sm"><use href="#caret" /></svg></i>
                  </div>
                </div>

                <div class="s-main">
                  <nav class="s-dock">
                    <div v-for="a in innerDock" :key="a.id" class="sd-item" :class="{ active: a.active }">
                      <i v-if="a.dot" class="run-dot"></i>
                      <svg width="40" height="40"><use :href="'#' + a.icon" /></svg>
                    </div>
                    <svg class="sd-fade" viewBox="0 0 34 14"><path d="M0 10l4-1 3 4H0zM11 12L24 0l10 5v9H11z" fill="#235f8e" /><path d="M24 0l10 5v9h-9z" fill="#2f7cb3" /></svg>
                    <svg class="sd-grid"><use href="#gridDots" /></svg>
                  </nav>

                  <div class="browser">
                    <div class="tabs">
                      <div class="pin"><svg width="15" height="15"><use href="#firefox" /></svg></div>
                      <div class="tab t1">
                        <svg width="15" height="13" viewBox="0 0 15 13"><path d="M1 9l4-7v7zM5.500 9l3-8 1 8zM10 9V2l3 7z" fill="#f0a02c" /><path d="M0 10h15v2.500H0z" fill="#8d8697" /></svg>
                        <span class="cut"><span v-fit="143">dbadmin.fast-pay.iq / 10.2</span></span>
                        <svg class="x"><path d="M1 1l6 6M7 1L1 7" stroke="#ddd" stroke-width="1.100" /></svg>
                      </div>
                      <div class="tab t2">
                        <svg width="13" height="10" viewBox="0 0 13 10"><path d="M0 1.500v8h3V5z" fill="#4a7df0" /><path d="M13 1.500v8h-3V5z" fill="#26a65b" /><path d="M0 1.500V5l6.500 4L13 5V1.500L11 .5 6.500 4 2 .5z" fill="#e7382d" /></svg>
                        <span class="cut"><span v-fit="141">Fwd: Change Account - M</span></span>
                        <svg class="x"><path d="M1 1l6 6M7 1L1 7" stroke="#ddd" stroke-width="1.100" /></svg>
                      </div>
                      <div class="tab t3">
                        <span class="cut"><span v-fit="162">Distribution Channel | Add ne</span></span>
                        <svg class="x"><path d="M1 1l6 6M7 1L1 7" stroke="#444" stroke-width="1.100" /></svg>
                      </div>
                      <svg class="plus" width="10" height="10" viewBox="0 0 10 10"><path d="M5 0v10M0 5h10" stroke="#ddd" stroke-width="1.200" /></svg>
                      <svg class="tchev" width="12" height="8" viewBox="0 0 12 8"><path d="M1.500 1.500L6 6l4.500-4.500" stroke="#ddd" stroke-width="1.400" fill="none" /></svg>
                      <svg class="wmin" width="8" height="8" viewBox="0 0 8 8"><path d="M.5 6.500h7" stroke="#ddd" stroke-width="1.200" /></svg>
                      <svg class="wres" width="8" height="8" viewBox="0 0 8 8"><path d="M1 2.500h4.500V7H1zM2.500 1H7v4.500" fill="none" stroke="#ddd" stroke-width="1" /></svg>
                      <svg class="wclose" width="16" height="16" viewBox="0 0 16 16"><circle cx="8" cy="8" r="8" fill="#ec5420" /><path d="M5 5l6 6M11 5l-6 6" stroke="#fff" stroke-width="1.500" /></svg>
                    </div>

                    <div class="toolbar">
                      <div class="tnav">
                        <svg viewBox="0 0 14 14"><path d="M13 7H1.500M6.500 2l-5 5 5 5" fill="none" stroke="#444" stroke-width="1.200" /></svg>
                        <svg viewBox="0 0 14 14"><path d="M1 7h11.500M7.500 2l5 5-5 5" fill="none" stroke="#aaa" stroke-width="1.200" /></svg>
                        <svg viewBox="0 0 14 14"><path d="M12.300 5.200A5.600 5.600 0 1 0 12.600 8M12.800 1v4.500H8.500" fill="none" stroke="#444" stroke-width="1.300" /></svg>
                      </div>
                      <div class="urlbar">
                        <svg class="u-shield" width="14" height="15" viewBox="0 0 14 15"><path d="M7 1c2 1.300 3.800 1.800 5.700 2 .2 5-1.200 8.800-5.700 11C2.500 11.800 1.100 8 1.300 3 3.200 2.800 5 2.300 7 1z" fill="none" stroke="#444" stroke-width="1.200" /></svg>
                        <svg class="u-lock" width="12" height="15" viewBox="0 0 12 15"><rect x="1.200" y="6.500" width="9.600" height="7.300" rx="1.300" fill="none" stroke="#444" stroke-width="1.200" /><path d="M3 6.500V4a3 3 0 0 1 6 0v2.500" fill="none" stroke="#444" stroke-width="1.200" /></svg>
                        <div class="url"><span v-fit="164.500">https://staging-distribution.</span><span v-fit="60.500" class="dom">fast-pay.iq</span><span v-fit="164">/sub-distributor/user/add-sr</span></div>
                        <div class="zoomlvl"><span v-fit="20.500">90%</span></div>
                        <svg class="u-star" width="14" height="14" viewBox="0 0 14 14"><path d="M7 1l1.800 4 4.200.4-3.200 2.900 1 4.300L7 10.300l-3.800 2.300 1-4.300L1 5.400 5.200 5z" fill="none" stroke="#333" stroke-width="1.100" /></svg>
                      </div>
                      <div class="tright">
                        <svg viewBox="0 0 14 14"><path d="M1.500 1.800h11v4.500a5.500 5.500 0 0 1-11 0zM4.500 5.500L7 8l2.500-2.500" fill="none" stroke="#555" stroke-width="1.200" /></svg>
                        <svg viewBox="0 0 14 14"><path d="M7 .5v8.500M3.500 5.800L7 9.300l3.500-3.500M1.300 10v1.500c0 .8.500 1.300 1.300 1.300h8.800c.8 0 1.300-.5 1.300-1.300V10" fill="none" stroke="#555" stroke-width="1.200" /></svg>
                        <svg viewBox="0 0 14 14"><path d="M2 3h10M2 6.700h10M2 10.400h10" stroke="#555" stroke-width="1.200" /></svg>
                      </div>
                    </div>

                    <div class="page">
                      <aside class="side">
                        <div class="brand"><span v-fit="99" class="b1">Fast</span><span v-fit="86" class="b2">Pay</span></div>
                        <div class="user">
                          <svg width="25" height="25"><use href="#power" /></svg>
                          <div class="who"><span v-fit="79">New Distributor</span><em v-fit="72">SubDistributor</em></div>
                        </div>
                        <div class="nav-item dash"><svg width="16" height="16"><use href="#n-dash" /></svg><span v-fit="55">Dashboard</span></div>
                        <template v-for="g in groups" :key="g.title">
                          <div class="nav-head"><span v-fit="g.w">{{ g.title }}</span></div>
                          <div v-for="n in g.items" :key="n.label" class="nav-item">
                            <svg width="16" height="16"><use :href="'#' + n.icon" /></svg><span v-fit="n.w">{{ n.label }}</span>
                          </div>
                        </template>
                      </aside>

                      <div class="content">
                        <div class="c-head">
                          <svg class="burger" width="12" height="11" viewBox="0 0 12 11"><path d="M.5 1.200h11M.5 5.500h11M.5 9.800h11" stroke="#777" stroke-width="1.300" /></svg>
                          <div class="bell">
                            <svg width="12" height="14" viewBox="0 0 12 14"><path d="M6 1.500c-2.500 0-3.700 1.800-3.700 4 0 3-.8 4-1.600 4.800h10.600C10.500 9.500 9.700 8.500 9.700 5.500c0-2.200-1.200-4-3.700-4zM4.600 12a1.500 1.500 0 0 0 2.800 0" fill="none" stroke="#888" stroke-width="1.100" /></svg>
                            <b>24</b>
                          </div>
                          <svg class="plogo" width="16" height="16" viewBox="0 0 24 24"><circle cx="12" cy="12" r="12" fill="#1c5fae" /><circle cx="12" cy="12" r="9" fill="none" stroke="#fff" stroke-width="1.500" /><path d="M8 9a5 5 0 1 0 8 0M12.300 6v6" stroke="#fff" stroke-width="2.400" fill="none" /></svg>
                          <span v-fit="79" class="pname">New Distributor</span>
                        </div>

                        <div class="c-title">
                          <h1><span v-fit="170">Add new Sales Rep</span></h1>
                          <div class="crumb"><span v-fit="30" class="home">Home</span><span class="sl">/</span><span v-fit="95">Add new Sales Rep</span></div>
                        </div>

                        <div class="card">
                          <div class="card-h"><span v-fit="139">Add Sales Rep in channel</span></div>
                          <div class="form">
                            <div class="row"><label><span v-fit="53">Mobile No</span><i>*</i></label><div class="f full ph"><span v-fit="75">+964**********</span></div></div>
                            <div class="row">
                              <label><span v-fit="57">First Name</span><i>*</i></label><div class="f half ph"><span v-fit="25">John</span></div>
                              <label class="l2"><span v-fit="56">Last Name</span><i>*</i></label><div class="f half ph"><span v-fit="21">Doe</span></div>
                            </div>
                            <div class="row"><label><span v-fit="30">Email</span><i>*</i></label><div class="f full ph"><span v-fit="108">john.doe@gmail.com</span></div></div>
                            <div class="row">
                              <label><span v-fit="33.500">Status</span><i>*</i></label><div class="f half"><span v-fit="31">Select</span><svg class="chev"><use href="#chev" /></svg></div>
                              <label class="l2"><span v-fit="28">Level</span><i>*</i></label>
                              <div class="f half focus"><span v-fit="31">Select</span><svg class="chev"><use href="#chev" /></svg>
                                <div class="menu">
                                  <div v-for="o in options" :key="o.label" class="opt" :class="{ muted: o.muted, hover: o.hover }"><span v-fit="o.w">{{ o.label }}</span></div>
                                  <svg class="cursor" width="13" height="19" viewBox="0 0 13 19"><path d="M1.500 1l9.500 9.500-4 .3 2.300 4.700-2 1L5 11.800l-3.500 2.700z" fill="#2a2a2a" stroke="#ddd" stroke-width=".8" /></svg>
                                </div>
                              </div>
                            </div>
                            <div class="row">
                              <label><span v-fit="38.500">Gender</span><i>*</i></label>
                              <div class="half radios"><i class="radio"></i><span v-fit="25.500" class="m">Male</span><i class="radio"></i><span v-fit="38.500">Female</span></div>
                              <label class="l2"><span v-fit="67">Date of Birth</span><i>*</i></label><div class="f half"></div>
                            </div>
                            <div class="row">
                              <label><span v-fit="43">Country</span></label><div class="f third"><span v-fit="31">Select</span><svg class="chev"><use href="#chev" /></svg></div>
                              <label class="l3"><span v-fit="28">State</span></label><div class="f full"></div>
                            </div>
                            <div class="row"><label><span v-fit="67.500">Address Line</span></label><div class="f full ph"><span v-fit="48">Erbil, Iraq</span></div></div>
                            <div class="row photo">
                              <label><span v-fit="31">Photo</span></label>
                              <div class="full"><div class="f"><span class="browse"><span v-fit="53">Browse...</span></span><span v-fit="79.500">No file selected.</span></div>
                                <div class="hint"><span v-fit="276">The file must be an image and have format (JPEG, PNG, JPG, or SVG).</span></div></div>
                            </div>
                            <div class="row"><label><span v-fit="90">Verification Type</span></label><div class="f full"><span v-fit="31">Select</span><svg class="chev"><use href="#chev" /></svg></div></div>
                            <div class="row doc">
                              <label class="two"><span v-fit="61.500">Verification</span><span v-fit="55">Document</span></label>
                              <div class="half"><div class="f"><span class="browse"><span v-fit="53">Browse...</span></span><span v-fit="79.500">No file selected.</span></div>
                                <div class="hint"><span v-fit="199.500">The file must be an image and have format (JPEG,</span><span v-fit="74.500">PNG, JPG, or SVG).</span></div></div>
                              <label class="l2"><span v-fit="54">Issue Date</span></label><div class="f half ph"><span v-fit="64">yyyy-mm-dd</span></div>
                            </div>
                            <div class="row area">
                              <label><span v-fit="47">Remarks</span></label>
                              <div class="f full ph ta"><span v-fit="115">Additional Information</span><svg class="grip" width="9" height="9" viewBox="0 0 9 9"><path d="M0 9l9-9v9z" fill="#999" /><path d="M3 9l6-6M6 9l3-3" stroke="#eee" stroke-width=".7" /></svg></div>
                            </div>
                          </div>
                          <div class="card-f"><button class="add"><span v-fit="71">Add Sales Rep</span></button><button class="cancel"><span v-fit="34">Cancel</span></button></div>
                        </div>

                        <footer class="c-foot"><b v-fit="138.500">Copyright © 2022 FastPay.</b><span v-fit="93">All rights reserved.</span></footer>
                      </div>
                    </div>
                  </div>
                </div>
              </div>
              <span v-fit="73.500" class="presenter">Monir Ahmed</span>
            </div>

            <div class="tip"><span v-fit="127.500">Using Custom Setup</span></div>
            <div class="bar">
              <div class="time"><span v-fit="34.500">18:52</span></div>
              <div class="b"><svg width="24" height="24" viewBox="0 0 24 24"><rect x="1" y="4.500" width="15" height="15" rx="3" fill="#fff" /><path d="M17 9.500l5.500-3.800v13L17 14.800z" fill="#fff" /><path d="M2.500 2l20 20.500" stroke="#414141" stroke-width="3.500" /><path d="M1.300 1.800l20.500 21" stroke="#fff" stroke-width="1.200" /></svg></div>
              <div class="b mic"><svg width="20" height="24" viewBox="0 0 20 24"><rect x="6" y="1.500" width="8.200" height="14.500" rx="4.100" fill="#e2dcf5" /><path d="M3 11.500v1.200a7.100 7.100 0 0 0 14.200 0v-1.200M10.100 20v3" fill="none" stroke="#e2dcf5" stroke-width="1.300" /></svg></div>
              <div class="b"><svg width="24" height="20" viewBox="0 0 24 20"><rect x="1.500" y="2" width="20.500" height="15.500" rx="2" fill="none" stroke="#fff" stroke-width="1.200" /><path d="M11.800 14.500V6M8 9.500L11.800 5.700l3.800 3.800" fill="none" stroke="#fff" stroke-width="1.300" /></svg></div>
              <div class="b"><svg width="20" height="6" viewBox="0 0 20 6"><circle cx="3.200" cy="3" r="2.200" fill="#fff" /><circle cx="10" cy="3" r="2.200" fill="#fff" /><circle cx="16.800" cy="3" r="2.200" fill="#fff" /></svg></div>
              <div class="b dk"><svg width="20" height="24" viewBox="0 0 20 24"><path d="M4.500 14.500V5.500a1.400 1.400 0 0 1 2.800 0V11M7.300 11V3a1.400 1.400 0 0 1 2.800 0v8M10.100 11V3.600a1.400 1.400 0 0 1 2.800 0V12M12.900 11V6a1.400 1.400 0 0 1 2.700 0v8.500c1-1.500 2.200-1.700 3-.9.300.3.300.7.100 1L15 20.500c-1 1.600-2.200 2.200-4.200 2.200-5 0-8.800-2.500-8.800-7V9.800c0-1.800 2-1.800 2.500-.6" fill="none" stroke="#fff" stroke-width="1.200" stroke-linejoin="round" /></svg></div>
              <div class="b dk"><svg width="24" height="24" viewBox="0 0 24 24"><path d="M12 2a10.200 10.200 0 1 1-4.800 19.200L2.300 22.300c-.4.100-.7-.2-.6-.6l1.200-4.800A10.200 10.200 0 0 1 12 2zM8.500 10h7.200M8.500 14.200h4.800" fill="none" stroke="#fff" stroke-width="1.200" /></svg></div>
              <div class="b dk"><svg width="24" height="24" viewBox="0 0 24 24"><g fill="none" stroke="#fff" stroke-width="1.200"><circle cx="9" cy="6.200" r="4.300" /><circle cx="18" cy="7.200" r="2.800" /><path d="M3.700 13.500h10.500c1 0 1.700.7 1.700 1.700v1c0 3.300-3.200 4.700-7 4.700s-6.900-1.400-6.900-4.700v-1c0-1 .7-1.700 1.700-1.700zM17.500 13.500h3c1 0 1.700.7 1.700 1.700v.5c0 2.600-2 4.200-5 4" /></g></svg></div>
              <div class="req"><div class="reqbtn"><span v-fit="106.500">Request control</span></div></div>
              <div class="hang"><svg width="22" height="12" viewBox="0 0 22 12"><path d="M11 1.200c4.500 0 8 1.600 9.600 4 .7 1 .8 2.500.4 3.700-.2.700-.9 1-1.600.9l-2.800-.6c-.7-.2-1.200-.7-1.300-1.400l-.3-2c-2.600-1-5.400-1-8 0l-.3 2c-.1.700-.6 1.200-1.300 1.400l-2.800.6c-.7.100-1.400-.2-1.600-.9-.4-1.200-.3-2.700.4-3.700 1.600-2.400 5.100-4 9.600-4z" fill="#fff" /></svg></div>
            </div>

            <div class="tiles">
              <div class="tile">
                <div class="av as">AS</div>
                <div class="tn"><span v-fit="89.500">Abu Bokor Sadik</span><svg width="16" height="16" viewBox="0 0 16 16"><rect x="5" y="1" width="5.500" height="9" rx="2.700" fill="#eee" /><path d="M3 7.500c0 3 2 4.500 4.800 4.500s4.800-1.500 4.800-4.500M7.800 12v3" stroke="#eee" fill="none" /><path d="M2 1l13 14" stroke="#333" stroke-width="2.500" /><path d="M1.200 1l13.500 14" stroke="#eee" /></svg></div>
              </div>
              <div class="tile speaking">
                <div class="av ma">MA</div>
                <div class="tn"><span v-fit="73.500">Monir Ahmed</span></div>
              </div>
            </div>
          </main>
        </div>
      </div>
    </div>
  </div>
</template>

<style>
html, body { margin: 0; background: #000; overflow: hidden; }
</style>

<style scoped>
* { box-sizing: border-box; }
svg { display: block; flex: none; overflow: visible; }
i { font-style: normal; }
span, em, b { white-space: nowrap; }
.defs { position: absolute; }
.desktop { width: 1920px; height: 1080px; overflow: hidden; display: flex; flex-direction: column; font-family: "Noto Sans", "Open Sans", sans-serif; color: #f2f2f2; }
.caret { width: 12px; height: 12px; }
.caret.sm { width: 10px; height: 10px; }

/* system bar */
.topbar { height: 27px; flex: none; background: #1d1d1d; display: flex; align-items: center; font-size: 14.200px; line-height: 20px; }
.tb-left { width: 940px; flex: none; padding-left: 12px; display: flex; align-items: center; }
.tb-teams { width: 16px; height: 15px; margin: 0 6px 0 35px; }
.tb-left .caret { margin-left: 4px; }
.tb-clock { width: 668px; flex: none; display: flex; gap: 10px; padding-bottom: 1px; }
.tray { width: 312px; flex: none; display: flex; align-items: center; }
.cell { display: flex; justify-content: center; align-items: center; flex: none; }
.tray .ind { width: 40px; }
.tray .gap11 { width: 11px; }
.tray .sys { width: 27.600px; }
.tray .car { width: 22px; }

.body { flex: 1; display: flex; min-height: 0; }
.dock { width: 64px; flex: none; padding-top: 4px; background: linear-gradient(180deg, #4b5058 0, #585b5e 70px, #5a5c5d 92px, #2d322b 122px, #22251f 180px, #1b1b1a 260px, #23221a 330px, #1a1a19 420px, #171717 640px, #1a1a19 860px, #171716 100%); display: flex; flex-direction: column; align-items: center; }
.dock-item { width: 56px; height: 56px; margin-bottom: 4px; border-radius: 4px; display: flex; align-items: center; justify-content: center; position: relative; }
.dock-item.active { background: rgba(255, 255, 255, .2); }
.run-dot { position: absolute; left: 0; top: 50%; width: 5px; height: 5px; margin-top: -2.500px; border-radius: 50%; background: #e95420; }
.dock-grid { width: 28px; height: 28px; margin-top: auto; margin-bottom: 16px; }

/* app frame */
.app { flex: 1; display: flex; flex-direction: column; background: #0a0a0a; min-width: 0; }
.app-head { height: 48px; flex: none; display: flex; align-items: center; }
.nav-arrows { width: 429px; padding-left: 13px; display: flex; gap: 17px; flex: none; }
.search { width: 998px; height: 30px; flex: none; background: #242424; border-radius: 4px; padding-left: 7px; display: flex; align-items: center; gap: 7px; font-size: 13.500px; color: #dcdcdc; }
.win { display: flex; align-items: center; padding-left: 220px; }
.me { width: 32px; height: 32px; margin: 0 29px 0 17px; border-radius: 50%; background: #e2daec; color: #4a3d66; font-size: 14px; font-weight: 500; display: flex; align-items: center; justify-content: center; position: relative; }
.busy { position: absolute; right: -1px; bottom: -1px; width: 13px; height: 13px; border-radius: 50%; background: #cc0a4c; border: 1.500px solid #0a0a0a; }
.win .w-btn { width: 14px; height: 14px; margin-right: 30px; }
.app-body { flex: 1; display: flex; min-height: 0; }
.rail { width: 68px; flex: none; display: flex; flex-direction: column; padding: 4px 0; font-size: 9.700px; color: #adadad; line-height: 14px; }
.rail-item { height: 48px; margin-bottom: 8px; padding-top: 8px; display: flex; flex-direction: column; align-items: center; gap: 1.500px; position: relative; }
.rail-item.active { color: #7b5fd9; }
.rail-item.active::before { content: ""; position: absolute; left: 2px; top: 0; width: 2px; height: 48px; background: #7447c9; }
.rail-item.solo { padding-top: 14px; }
.rail-item.help { margin-top: auto; margin-bottom: 0; padding-top: 8px; gap: 1.500px; }
.count { position: absolute; left: 39px; top: 0; width: 16px; height: 16px; border-radius: 50%; background: #d13a2f; color: #fff; font-size: 10px; line-height: 16px; text-align: center; }

.call { flex: 1; display: flex; flex-direction: column; position: relative; min-width: 0; }
.stage { height: 911px; flex: none; background: #000; padding-left: 84px; position: relative; }
.screen { width: 1620px; height: 911px; display: flex; flex-direction: column; overflow: hidden; }
.presenter { position: absolute; left: 32px; top: 877px; font-size: 12.500px; line-height: 18px; text-shadow: 0 0 2px #000, 0 1px 2px #000; }

/* shared desktop */
.s-top { height: 23px; flex: none; background: #201e1f; display: flex; align-items: center; font-size: 11.800px; line-height: 18px; color: #dedede; padding-bottom: 1px; }
.s-left { width: 796px; padding-left: 10.500px; display: flex; align-items: center; flex: none; }
.s-left svg:first-of-type { margin: 0 5px 0 28.500px; }
.s-left .caret { margin-left: 4px; }
.s-clock { width: 561px; display: flex; flex: none; }
.s-clock .bn { margin-right: 3.500px; font-size: 10.500px; }
.s-clock span:nth-child(2) { margin-right: 6px; }
.s-tray { display: flex; align-items: center; flex: none; }
.s-tray .cell { width: 33.400px; }
.s-tray .gap10 { width: 10.400px; }
.s-tray .cell.sys { width: 23.800px; }
.s-tray .cell.car { width: 14px; }
.s-main { flex: 1; display: flex; min-height: 0; }
.s-dock { width: 61px; flex: none; background: linear-gradient(180deg, #575656, #4e4c4d 30%, #454345 65%, #403e40); display: flex; flex-direction: column; align-items: center; }
.sd-item { width: 61px; height: 57.450px; flex: none; display: flex; justify-content: center; align-items: center; position: relative; padding-right: 1px; }
.sd-item.active::before { content: ""; position: absolute; left: 3px; top: 2.500px; width: 54.500px; height: 54px; border-radius: 4px; background: rgba(255, 255, 255, .2); }
.sd-item svg { position: relative; }
.sd-item .run-dot { left: 3px; z-index: 1; }
.sd-fade { width: 34px; height: 14px; margin-top: 10px; opacity: .85; }
.sd-grid { width: 26px; height: 26px; margin-top: 17px; margin-right: 1px; }

.browser { flex: 1; display: flex; flex-direction: column; min-width: 0; }
.tabs { height: 37px; flex: none; background: #363135; display: flex; align-items: center; font-size: 12.300px; color: #e8e6e8; line-height: 18px; }
.pin { width: 35.500px; height: 37px; border-right: 1px solid #5a565a; display: flex; align-items: center; padding-left: 9px; flex: none; }
.tab { display: flex; align-items: center; height: 30.500px; flex: none; }
.tab .cut { overflow: hidden; -webkit-mask-image: linear-gradient(90deg, #000 84%, transparent 99%); mask-image: linear-gradient(90deg, #000 84%, transparent 99%); }
.tab .cut span { display: inline-block; }
.x { width: 8px; height: 8px; margin-left: 2px; }
.t1 { width: 200.500px; padding-left: 10px; gap: 3.500px; }
.t1 .cut { width: 143px; }
.t1 .x { margin-left: -2.500px; }
.t2 { width: 182px; gap: 4px; }
.t2 .cut { width: 141px; }
.t2 .x { margin-left: -1.500px; }
.t3 { width: 187px; background: #fafafc; border-radius: 3px; color: #444247; padding-left: 7.500px; box-shadow: 0 0 2px #000; }
.t3 .cut { width: 161px; }
.t3 .x { margin-left: .500px; }
.plus { margin-left: 13px; }
.tchev { margin-left: 789px; }
.wmin { margin-left: 52.500px; }
.wres { margin-left: 20.500px; }
.wclose { margin-left: 16.500px; }
.toolbar { height: 34px; flex: none; background: #f8f7fb; border-bottom: 2px solid #e3e1e6; display: flex; align-items: center; padding-top: 2px; }
.tnav { width: 195px; padding-left: 13px; display: flex; gap: 17px; flex: none; }
.tnav svg, .tright svg { width: 13.500px; height: 13.500px; }
.urlbar { width: 1169px; height: 27px; flex: none; background: #fff; border: 1px solid #cbcace; border-radius: 4px; display: flex; align-items: center; }
.u-shield { margin-left: 5px; }
.u-lock { margin-left: 11px; }
.url { display: flex; margin-left: 9px; font-size: 12.500px; line-height: 18px; color: #85838a; width: 1055px; }
.url .dom { color: #111; }
.zoomlvl { width: 32px; height: 18px; flex: none; background: #e2e1e5; border-radius: 3px; font-size: 10.500px; line-height: 18px; color: #333; display: flex; justify-content: center; }
.u-star { margin-left: 9.500px; }
.tright { margin-left: 106.500px; display: flex; gap: 17px; flex: none; }

/* web page */
.page { flex: 1; display: flex; min-height: 0; font-family: "Noto Sans CJK SC", "Noto Sans", sans-serif; font-size: 11px; line-height: 18px; background: #f4f4f9; }
.side { width: 189px; flex: none; background: #343741; border-right: 1px solid #4b4d55; box-shadow: 0 14px 22px rgba(0, 0, 0, .28), 0 8px 10px rgba(0, 0, 0, .2); position: relative; z-index: 2; color: #bfc3ca; display: flex; flex-direction: column; }
.brand { height: 46px; flex: none; overflow: hidden; display: flex; gap: 3px; box-shadow: 0 2px 5px rgba(0, 0, 0, .3); font-family: "Inter", sans-serif; font-weight: 700; font-size: 49px; line-height: 38px; }
.b1 { color: #fb0a5e; margin-left: -1px; }
.b2 { color: #2f2660; font-weight: 600; }
.user { height: 69px; flex: none; margin: 0 6px; border-bottom: 1px solid #4f535d; padding: 12px 0 0 10px; display: flex; gap: 8px; }
.user svg { border-radius: 50%; box-shadow: 0 2px 4px rgba(0, 0, 0, .35); }
.who { display: flex; flex-direction: column; align-items: flex-start; padding-top: 4px; }
.nav-item { height: 32.900px; flex: none; padding-left: 20px; display: flex; align-items: center; gap: 6.500px; }
.nav-item svg { margin-top: -1px; }
.dash { margin-top: 11px; }
.nav-head { height: 28px; margin-top: 14.200px; flex: none; padding-left: 18px; padding-top: 2px; display: flex; align-items: center; font-size: 10.500px; }
.content { flex: 1; display: flex; flex-direction: column; min-width: 0; }
.c-head { height: 43px; flex: none; background: #fff; border-bottom: 1px solid #e6e6ec; display: flex; align-items: center; color: #85878b; padding-top: 2px; }
.burger { margin-left: 17px; }
.bell { margin-left: 1190px; position: relative; flex: none; }
.bell b { position: absolute; left: 6.500px; top: -3px; width: 13px; height: 10px; border-radius: 2px; background: #ee1c3c; color: #ffd5da; font-size: 7px; line-height: 10px; text-align: center; font-weight: 400; }
.plogo { margin: 1px 2px 0 23.500px; }
.c-title { height: 55px; flex: none; padding: 0 12px 0 11.500px; display: flex; justify-content: space-between; }
h1 { margin: 10px 0 0; font-size: 19.700px; line-height: 30px; font-weight: 400; color: #3c4048; }
.crumb { display: flex; margin-top: 14px; color: #7d838b; }
.home { color: #2a7be4; }
.sl { width: 17px; text-align: center; }
.card { width: 667.500px; height: 634px; flex: none; margin-left: 11.400px; background: #fff; border-radius: 3px; box-shadow: 0 0 1px rgba(0, 0, 0, .15), 0 1px 2px rgba(0, 0, 0, .2); display: flex; flex-direction: column; }
.card-h { height: 36px; flex: none; background: #0092c0; border-radius: 3px 3px 0 0; color: #e6f6fb; padding: 0 0 1.500px 15px; display: flex; align-items: center; font-size: 12.200px; }
.form { flex: none; height: 551px; padding: 14.500px 15.300px 0 15px; color: #212529; }
.row { height: 40.850px; display: flex; align-items: flex-start; }
.row.photo { height: 58.900px; }
.row.doc { height: 77.100px; }
label { width: 108px; flex: none; height: 28.500px; display: flex; align-items: center; font-weight: 700; }
label i { color: #f01c24; margin-left: 3px; font-weight: 700; }
.l2 { margin-left: 11.800px; width: 107.800px; }
.l3 { margin-left: 11.800px; width: 54px; }
label.two { flex-direction: column; align-items: flex-start; padding-top: 5px; }
.f { height: 28.500px; border: 1px solid #d4d7db; border-radius: 3px; background: #fff; color: #5d646b; padding: 0 9px; display: flex; align-items: center; position: relative; }
.ph { color: #a3a6ac; }
.full { flex: 1; }
.half { width: 204.700px; flex: none; }
.third { width: 150.800px; flex: none; }
.focus { border-color: #8bb8ea; }
.chev { width: 10px; height: 10px; margin-left: auto; margin-right: -7px; }
.radios { height: 29.500px; display: flex; align-items: center; font-weight: 700; }
.radio { width: 12px; height: 12px; border-radius: 50%; background: linear-gradient(#cdccd0, #dddce0); border: 1px solid #b4b3b7; margin-right: 6px; }
.radios .m { margin-right: 12.500px; }
.browse { border: 1px solid #8f8f9d; border-radius: 2.500px; background: #e9e9ed; color: #1a1a1a; height: 17px; width: 61px; display: flex; align-items: center; justify-content: center; margin: 1px 3.500px 0 0; font: 12.400px/16px "Noto Sans", sans-serif; flex: none; }
.hint { display: flex; flex-direction: column; align-items: flex-start; font-size: 9px; line-height: 18.200px; color: #868b93; padding-top: 1.500px; }
.ta { height: 46.500px; align-items: flex-start; padding-top: 4px; }
.grip { position: absolute; right: 1px; bottom: 1px; }
.area label { height: 28px; }
.card-f { flex: 1; background: #f7f6fa; display: flex; justify-content: space-between; padding: 9px 15.300px 0 15px; }
button { font: inherit; height: 28.500px; border-radius: 2.500px; padding: 0; display: flex; align-items: center; justify-content: center; }
.add { width: 90px; background: #0092c0; color: #d9f0f7; border: 1px solid #0092c0; }
.cancel { width: 53px; background: #f8f9fa; color: #666; border: 1px solid #e2e3e6; }
.c-foot { margin-top: auto; height: 43.300px; flex: none; background: #fff; border-top: 1px solid #dee2e6; padding: 11.500px 11.500px 0; display: flex; gap: 3px; color: #8b919a; }
.menu { position: absolute; left: -1px; top: 27.500px; width: 204px; height: 175px; z-index: 3; background: #fbfafc; border: 1px solid #bab9be; border-radius: 0 0 3px 3px; box-shadow: 0 1px 3px rgba(0, 0, 0, .25); padding-top: 2.500px; font: 12.400px/21px "Noto Sans", sans-serif; color: #4a484e; }
.opt { height: 21.100px; padding: 0 0 1px 4.500px; display: flex; align-items: center; }
.opt.muted { color: #a2a0a6; }
.opt.hover { background: #dcdadd; }
.cursor { position: absolute; left: 59px; top: 130px; }

/* call controls */
.tip { position: absolute; left: 818px; top: 770px; width: 152px; height: 32px; border-radius: 4px; background: rgba(72, 72, 72, .92); display: flex; align-items: center; justify-content: center; font-size: 13.500px; text-shadow: 0 1px 2px #000; color: #f4f4f4; z-index: 4; }
.bar { position: absolute; left: 561px; top: 823px; width: 664px; height: 52px; border-radius: 4px; background: #424242; display: flex; z-index: 4; box-shadow: 0 4px 10px rgba(0, 0, 0, .5); }
.time { width: 69px; border-right: 1px solid #1d1d1d; display: flex; align-items: center; justify-content: center; font-size: 13.500px; font-weight: 600; color: #b0b0b0; flex: none; padding-right: 1px; }
.b { width: 52px; flex: none; display: flex; align-items: center; justify-content: center; }
.dk, .req { background: #3a3a3a; }
.mic { background: #353042; border: 2px solid #fff; border-radius: 4px; width: 50px; margin: 1px; }
.req { width: 179px; flex: none; border-left: 1px solid #1d1d1d; display: flex; align-items: center; padding-left: 16px; }
.reqbtn { width: 146px; height: 32px; background: #292929; border: 1px solid #5f5f5f; border-radius: 4px; display: flex; align-items: center; justify-content: center; font-size: 13.500px; font-weight: 700; color: #fff; }
.hang { width: 52px; background: #a30440; border-radius: 0 4px 4px 0; display: flex; align-items: center; justify-content: center; }
.tiles { flex: 1; background: #1a1a1a; display: flex; justify-content: flex-end; }
.tile { width: 180px; background: #333; display: flex; flex-direction: column; align-items: center; padding-top: 25px; }
.speaking { background: radial-gradient(circle at 90px 47px, #5f4a8a 0, #54457a 30px, #453b5e 55px, #3c3648 85px, #38343f 120px); }
.av { width: 44px; height: 44px; border-radius: 50%; font-size: 17px; font-weight: 500; display: flex; align-items: center; justify-content: center; flex: none; }
.as { background: #f3d6cd; color: #7a1f14; }
.ma { background: #e2daec; color: #4f3a6b; box-shadow: 0 0 0 2px #332e3f, 0 0 0 5px #a685f5; }
.tn { align-self: flex-start; padding-left: 15px; margin-top: 8px; display: flex; align-items: center; gap: 6px; font-size: 12.500px; line-height: 18px; height: 18px; text-shadow: 0 1px 2px #000; color: #f0f0f0; }
</style>
